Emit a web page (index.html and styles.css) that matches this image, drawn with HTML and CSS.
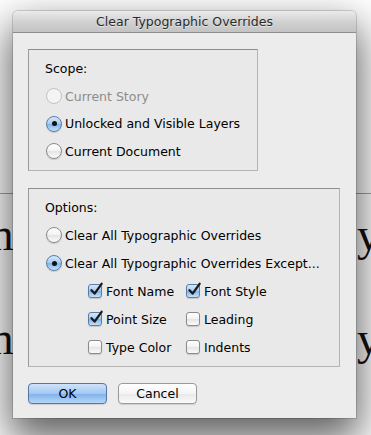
FILE: index.html
```html
<!DOCTYPE html>
<html lang="en">

<head>
  <meta charset="UTF-8">
  <meta name="viewport" content="width=device-width, initial-scale=1.0">
  <title>Clear Typographic Overrides</title>
  <link rel="stylesheet" href="styles.css">
</head>

<body>
  <div class="doc">
    <div class="doc-rule"></div>
    <div class="doc-line"><span>m</span><span>y</span></div>
    <div class="doc-line"><span>m</span><span>y</span></div>
  </div>

  <div class="dialog">
    <div class="titlebar">Clear Typographic Overrides</div>

    <div class="dialog-body">
      <div class="group group-scope">
        <div class="row group-title">Scope:</div>
        <label class="row is-disabled"><span class="radio"></span>Current Story</label>
        <label class="row"><span class="radio is-on"></span>Unlocked and Visible Layers</label>
        <label class="row"><span class="radio"></span>Current Document</label>
      </div>

      <div class="group group-options">
        <div class="row group-title">Options:</div>
        <label class="row"><span class="radio"></span>Clear All Typographic Overrides</label>
        <label class="row"><span class="radio is-on"></span>Clear All Typographic Overrides Except...</label>

        <div class="checks">
          <label class="row"><span class="check is-on"><svg viewBox="0 0 16 16"><path d="M3.5 8.2 L6.6 11.6 L13.6 1.8" /></svg></span>Font Name</label>
          <label class="row"><span class="check is-on"><svg viewBox="0 0 16 16"><path d="M3.5 8.2 L6.6 11.6 L13.6 1.8" /></svg></span>Font Style</label>
          <label class="row"><span class="check is-on"><svg viewBox="0 0 16 16"><path d="M3.5 8.2 L6.6 11.6 L13.6 1.8" /></svg></span>Point Size</label>
          <label class="row"><span class="check"></span>Leading</label>
          <label class="row"><span class="check"></span>Type Color</label>
          <label class="row"><span class="check"></span>Indents</label>
        </div>
      </div>

      <div class="buttons">
        <button class="btn btn-default">OK</button>
        <button class="btn">Cancel</button>
      </div>
    </div>
  </div>
</body>

</html>
```

FILE: styles.css
```css
html,
body {
  margin: 0;
  padding: 0;
  height: 100%;
  overflow: hidden;
  background: #fff;
  font-family: "DejaVu Sans", "Noto Sans", sans-serif;
}

/* document behind the dialog */
.doc {
  position: relative;
}

.doc-rule {
  height: 1px;
  margin-top: 193px;
  background: #7fa9e0;
}

.doc-line {
  display: flex;
  justify-content: space-between;
  margin: 0 -9px 0 -22px;
  font-family: "Liberation Serif", serif;
  font-size: 46px;
  line-height: 104px;
  color: #111;
}

.doc-rule + .doc-line {
  margin-top: -11px;
}

/* dialog */
.dialog {
  position: absolute;
  left: 13px;
  top: 11px;
  width: 343px;
  height: 407px;
  background: #ececec;
  border-radius: 5px 5px 0 0;
  box-shadow: 0 18px 40px 4px rgba(0, 0, 0, 0.62), 0 0 0 1px rgba(0, 0, 0, 0.15);
  display: flex;
  flex-direction: column;
}

.titlebar {
  height: 21px;
  line-height: 21px;
  text-align: center;
  font-size: 12.5px;
  color: #2a2a2a;
  background: linear-gradient(#ebebeb, #d2d2d2 50%, #c3c3c3);
  border-bottom: 1px solid #8d8d8d;
  border-radius: 5px 5px 0 0;
  text-shadow: 0 1px 0 rgba(255, 255, 255, 0.5);
}

.dialog-body {
  padding: 16px 16px 0 15px;
  display: flex;
  flex-direction: column;
  align-items: flex-start;
  font-size: 12.5px;
  color: #000;
}

.group {
  box-sizing: border-box;
  border: 1px solid;
  border-color: #8e8e8e #b4b4b4 #b4b4b4 #9a9a9a;
  background: #e9e9e9;
  padding: 5px 0 0 17px;
}

.group-scope {
  width: 230px;
  height: 122px;
}

.group-options {
  width: 312px;
  height: 179px;
  margin-top: 17px;
  padding-top: 4px;
}

.row {
  display: flex;
  align-items: center;
  height: 28px;
  gap: 3px;
  white-space: nowrap;
}

.group-scope .row {
  height: 27.5px;
}

.group-title {
  margin-left: -1px;
}

.is-disabled {
  color: #8c8c8c;
}

.radio {
  box-sizing: border-box;
  width: 16px;
  height: 16px;
  border-radius: 50%;
  border: 1px solid #8a8a8a;
  background: linear-gradient(#ffffff, #f3f3f3 50%, #e4e4e4 51%, #fbfbfb);
  box-shadow: 0 1px 1px rgba(0, 0, 0, 0.15);
  display: flex;
  align-items: center;
  justify-content: center;
  flex: 0 0 auto;
}

.is-disabled .radio {
  border-color: #c2c2c2;
  background: #f4f4f4;
  box-shadow: none;
}

.radio.is-on {
  border-color: #5a7da8;
  background: linear-gradient(#d7e8fa, #a5cbf2 50%, #7db3ec 51%, #c4e1fb);
}

.radio.is-on::after {
  content: "";
  width: 5px;
  height: 5px;
  border-radius: 50%;
  background: #111;
}

.checks {
  display: grid;
  grid-template-columns: 98px auto;
  margin-left: 42px;
}

.check {
  position: relative;
  box-sizing: border-box;
  width: 14px;
  height: 14px;
  border-radius: 3px;
  border: 1px solid #8a8a8a;
  background: linear-gradient(#ffffff, #f3f3f3 50%, #e4e4e4 51%, #fbfbfb);
  box-shadow: 0 1px 1px rgba(0, 0, 0, 0.15);
  margin-right: 1px;
  flex: 0 0 auto;
}

.check.is-on {
  border-color: #5a7da8;
  background: linear-gradient(#d7e8fa, #a5cbf2 50%, #7db3ec 51%, #c4e1fb);
}

.check svg {
  position: absolute;
  left: -1px;
  top: -3px;
  width: 16px;
  height: 16px;
  fill: none;
  stroke: #1a1a1a;
  stroke-width: 2.3;
  stroke-linecap: round;
  stroke-linejoin: round;
}

.buttons {
  display: flex;
  gap: 11px;
  margin-top: 16px;
}

.btn {
  width: 79px;
  height: 21px;
  padding: 0;
  font-family: inherit;
  font-size: 12.5px;
  color: #000;
  border: 1px solid #9a9a9a;
  border-radius: 4px;
  background: linear-gradient(#ffffff, #f4f4f4 50%, #e8e8e8 51%, #fafafa);
  box-shadow: 0 1px 1px rgba(0, 0, 0, 0.12);
}

.btn-default {
  border-color: #5676a6;
  background: linear-gradient(#cfe3f9, #a3c8f1 50%, #7fb1ea 51%, #b5d7f8);
}
```
